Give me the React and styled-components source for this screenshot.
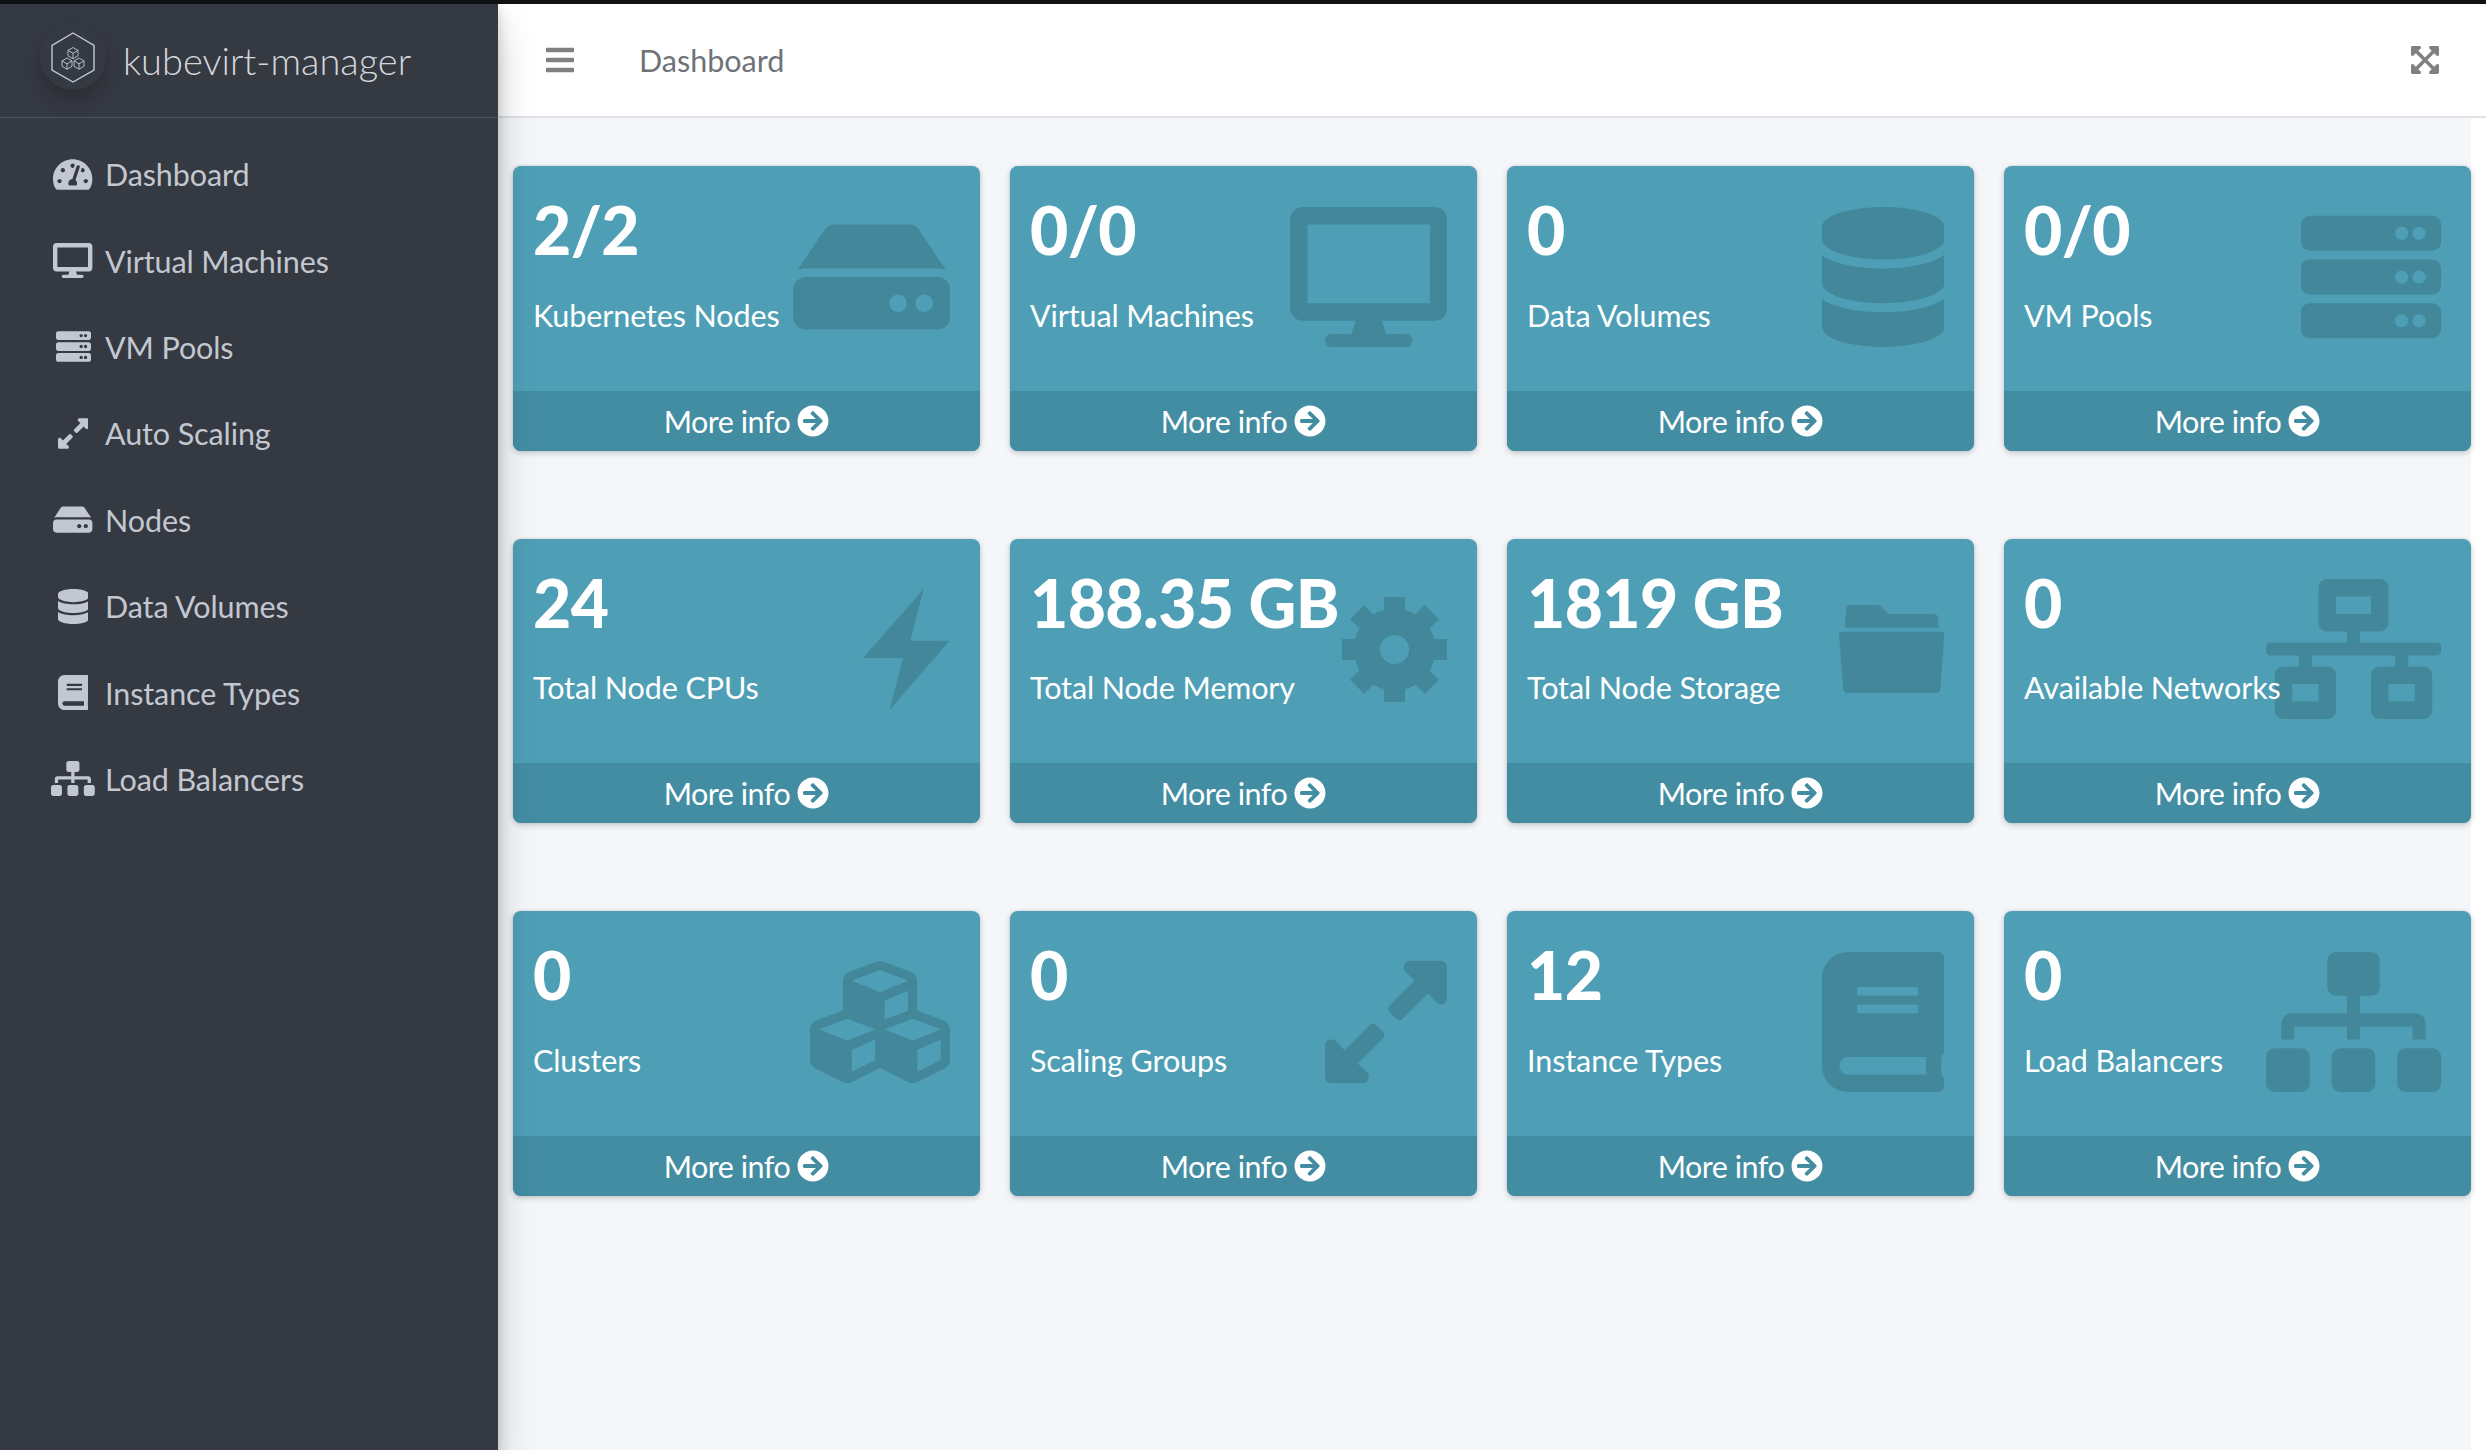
import React from 'react';
import styled, { createGlobalStyle } from 'styled-components';
import {
  FaTachometerAlt, FaDesktop, FaServer, FaExpandAlt, FaHdd, FaDatabase, FaBook, FaSitemap,
  FaNetworkWired, FaCubes, FaArrowCircleRight, FaBars, FaExpandArrowsAlt,
} from 'react-icons/fa';

const Bolt = () => (
  <svg viewBox="0 0 86.600 121">
    <path d="M60.600 0L47.300 51.700H86.600L26.600 121L40 69H0Z" />
  </svg>
);

const Gear = () => (
  <svg viewBox="0 0 105 105">
    <path d="M52.500 11.500A41 41 0 1 1 52.500 93.500A41 41 0 1 1 52.500 11.500Z
      M42 0H63V20H42Z M105 42V63H85V42Z M63 105H42V85H63Z M0 63V42H20V63Z
      M8 22.300L22.300 8L36 22L22 36Z M82.700 8L97 22.300L83 36L69 22Z
      M97 82.700L82.700 97L69 83L83 69Z M22.300 97L8 82.700L22 69L36 83Z
      M52.500 38A14.500 14.500 0 1 0 52.500 67A14.500 14.500 0 1 0 52.500 38Z" />
  </svg>
);

const Folder = () => (
  <svg viewBox="0 0 105.300 88">
    <path d="M5.700 22.700L7.500 3Q7.800 0 11 0H39Q41 0 42 1.500L47 6.500Q49 9 52 9H95Q98 9 99 12L99.700 22.700Z
      M0 29.700Q0 26.700 3 26.700H102.300Q105.300 26.700 105.300 29.700L101.500 84Q101 88 97.500 88H8Q4.500 88 4.200 84Z" />
  </svg>
);

const Logo = () => (
  <svg viewBox="0 0 44 51" width="44" height="51" fill="none" stroke="#c2c7d0">
    <path d="M22 1 L43 13.500 V38 L22 50 L1 38 V13.500 Z" strokeWidth="1.400" />
    <g strokeWidth="0.900">
      <path d="M22 15.500l5 2.900v5.400l-5 2.900-5-2.900v-5.400zM17 18.400l5 2.900 5-2.900M22 21.300v5.400" />
      <path d="M16 26l5 2.900v5.400l-5 2.900-5-2.900v-5.400zM11 28.900l5 2.900 5-2.900M16 31.800v5.400" />
      <path d="M28 26l5 2.900v5.400l-5 2.900-5-2.900v-5.400zM23 28.900l5 2.900 5-2.900M28 31.800v5.400" />
    </g>
  </svg>
);

// ratio is the icon's viewBox width against its 512 height
const navItems = [
  { label: 'Dashboard', Icon: FaTachometerAlt, ratio: 576 / 512 },
  { label: 'Virtual Machines', Icon: FaDesktop, ratio: 576 / 512 },
  { label: 'VM Pools', Icon: FaServer, ratio: 1 },
  { label: 'Auto Scaling', Icon: FaExpandAlt, ratio: 448 / 512 },
  { label: 'Nodes', Icon: FaHdd, ratio: 576 / 512 },
  { label: 'Data Volumes', Icon: FaDatabase, ratio: 448 / 512 },
  { label: 'Instance Types', Icon: FaBook, ratio: 448 / 512 },
  { label: 'Load Balancers', Icon: FaSitemap, ratio: 640 / 512 },
];

const cards = [
  { value: '2/2', label: 'Kubernetes Nodes', Icon: FaHdd, w: 157.5, h: 140 },
  { value: '0/0', label: 'Virtual Machines', Icon: FaDesktop, w: 157.5, h: 140 },
  { value: '0', label: 'Data Volumes', Icon: FaDatabase, w: 122.5, h: 140 },
  { value: '0/0', label: 'VM Pools', Icon: FaServer, w: 140, h: 140 },
  { value: '24', label: 'Total Node CPUs', Icon: Bolt, w: 86.6, h: 121 },
  { value: '188.35 GB', label: 'Total Node Memory', Icon: Gear, w: 105, h: 105 },
  { value: '1819 GB', label: 'Total Node Storage', Icon: Folder, w: 105.3, h: 88 },
  { value: '0', label: 'Available Networks', Icon: FaNetworkWired, w: 175, h: 140 },
  { value: '0', label: 'Clusters', Icon: FaCubes, w: 140, h: 140 },
  { value: '0', label: 'Scaling Groups', Icon: FaExpandAlt, w: 122.5, h: 140 },
  { value: '12', label: 'Instance Types', Icon: FaBook, w: 122.5, h: 140 },
  { value: '0', label: 'Load Balancers', Icon: FaSitemap, w: 175, h: 140 },
];

const App = () => (
  <>
    <GlobalStyle />
    <Page>
      <Sidebar>
        <Brand>
          <LogoBadge><Logo /></LogoBadge>
          <BrandName>kubevirt-manager</BrandName>
        </Brand>
        <Nav>
          {navItems.map(({ label, Icon, ratio }) => (
            <NavItem key={label}>
              <NavIcon $ratio={ratio}><Icon /></NavIcon>
              <span>{label}</span>
            </NavItem>
          ))}
        </Nav>
      </Sidebar>
      <Main>
        <Header>
          <HeaderLeft>
            <FaBars />
            <HeaderTitle>Dashboard</HeaderTitle>
          </HeaderLeft>
          <FaExpandArrowsAlt />
        </Header>
        <Content>
          <CardGrid>
            {cards.map(({ value, label, Icon, w, h }) => (
              <Card key={label + value}>
                <CardBody>
                  <Value>{value}</Value>
                  <Label>{label}</Label>
                  <CardIcon $w={w} $h={h}><Icon /></CardIcon>
                </CardBody>
                <CardFooter>
                  <span>More info</span>
                  <FaArrowCircleRight />
                </CardFooter>
              </Card>
            ))}
          </CardGrid>
        </Content>
      </Main>
    </Page>
  </>
);

export default App;

const GlobalStyle = createGlobalStyle`
  html, body {
    margin: 0;
    height: 100%;
    background: #ffffff;
    font-family: Lato, "Noto Sans", sans-serif;
    overflow: hidden;
  }
  #root {
    height: 100%;
  }
`;

const Page = styled.div`
  display: flex;
  height: 1446px;
  border-top: 4px solid #111214;
`;

const Sidebar = styled.aside`
  position: relative;
  z-index: 2;
  width: 498px;
  flex-shrink: 0;
  background: #353942;
  box-shadow: 0 22px 36px rgba(0, 0, 0, 0.2), 0 4px 12px rgba(0, 0, 0, 0.18);
`;

const Brand = styled.div`
  display: flex;
  align-items: center;
  height: 113px;
  padding-left: 40px;
  border-bottom: 1px solid #4b545c;
`;

const LogoBadge = styled.div`
  display: flex;
  align-items: center;
  justify-content: center;
  width: 66px;
  height: 66px;
  margin: 0 17px 7px 0;
  border-radius: 50%;
  box-shadow: 0 10px 20px rgba(0, 0, 0, 0.22);
`;

const BrandName = styled.span`
  margin-bottom: 2px;
  color: #d2d6dc;
  font-size: 38px;
  font-weight: 300;
  line-height: 1;
`;

const Nav = styled.nav`
  display: flex;
  flex-direction: column;
  padding: 13px 0 0 53px;
`;

const NavItem = styled.div`
  display: flex;
  align-items: center;
  height: 86.4px;
  gap: 12px;
  color: #c2c7d0;
  font-size: 30.5px;
  letter-spacing: -0.1px;
`;

const NavIcon = styled.span`
  display: flex;
  justify-content: center;
  width: 40px;
  flex-shrink: 0;
  svg {
    height: 35px;
    width: ${(p) => p.$ratio * 35}px;
    flex-shrink: 0;
  }
`;

const Main = styled.main`
  display: flex;
  flex-direction: column;
  flex: 1;
  min-width: 0;
`;

const Header = styled.header`
  display: flex;
  align-items: center;
  justify-content: space-between;
  height: 112px;
  padding: 0 47px 0 48px;
  background: #ffffff;
  border-bottom: 2px solid #dee2e6;
  color: #808080;
  svg {
    height: 32px;
    width: 28px;
  }
`;

const HeaderLeft = styled.div`
  display: flex;
  align-items: center;
  gap: 65px;
`;

const HeaderTitle = styled.span`
  color: #6f7379;
  font-size: 30.5px;
`;

const Content = styled.div`
  flex: 1;
  margin-right: 15px;
  padding: 48px 0 0 15px;
  background: #f4f6f9;
`;

const CardGrid = styled.div`
  display: grid;
  grid-template-columns: repeat(4, 467px);
  grid-auto-rows: 284.5px;
  column-gap: 30px;
  row-gap: 88px;
`;

const Card = styled.article`
  display: flex;
  flex-direction: column;
  overflow: hidden;
  border-radius: 8px;
  background: #4e9fb6;
  color: #ffffff;
  box-shadow: 0 0 2px rgba(0, 0, 0, 0.125), 0 2px 6px rgba(0, 0, 0, 0.2);
`;

const CardBody = styled.div`
  position: relative;
  flex: 1;
  padding: 22px 20px 0;
`;

const Value = styled.div`
  position: relative;
  z-index: 1;
  margin-bottom: 18.5px;
  font-size: 66px;
  font-weight: 900;
  letter-spacing: -0.6px;
  line-height: 84px;
  white-space: nowrap;
`;

const Label = styled.div`
  position: relative;
  z-index: 1;
  font-size: 30.5px;
  letter-spacing: -0.1px;
  line-height: 48px;
`;

const CardIcon = styled.div`
  position: absolute;
  top: 0;
  right: 30px;
  display: flex;
  align-items: center;
  height: 221px;
  color: rgba(0, 0, 0, 0.15);
  svg {
    width: ${(p) => p.$w}px;
    height: ${(p) => p.$h}px;
    fill: currentColor;
  }
`;

const CardFooter = styled.div`
  display: flex;
  align-items: center;
  justify-content: center;
  gap: 7px;
  height: 60px;
  background: #438da3;
  font-size: 30.5px;
  letter-spacing: -0.5px;
  svg {
    height: 32px;
    width: 32px;
  }
`;
